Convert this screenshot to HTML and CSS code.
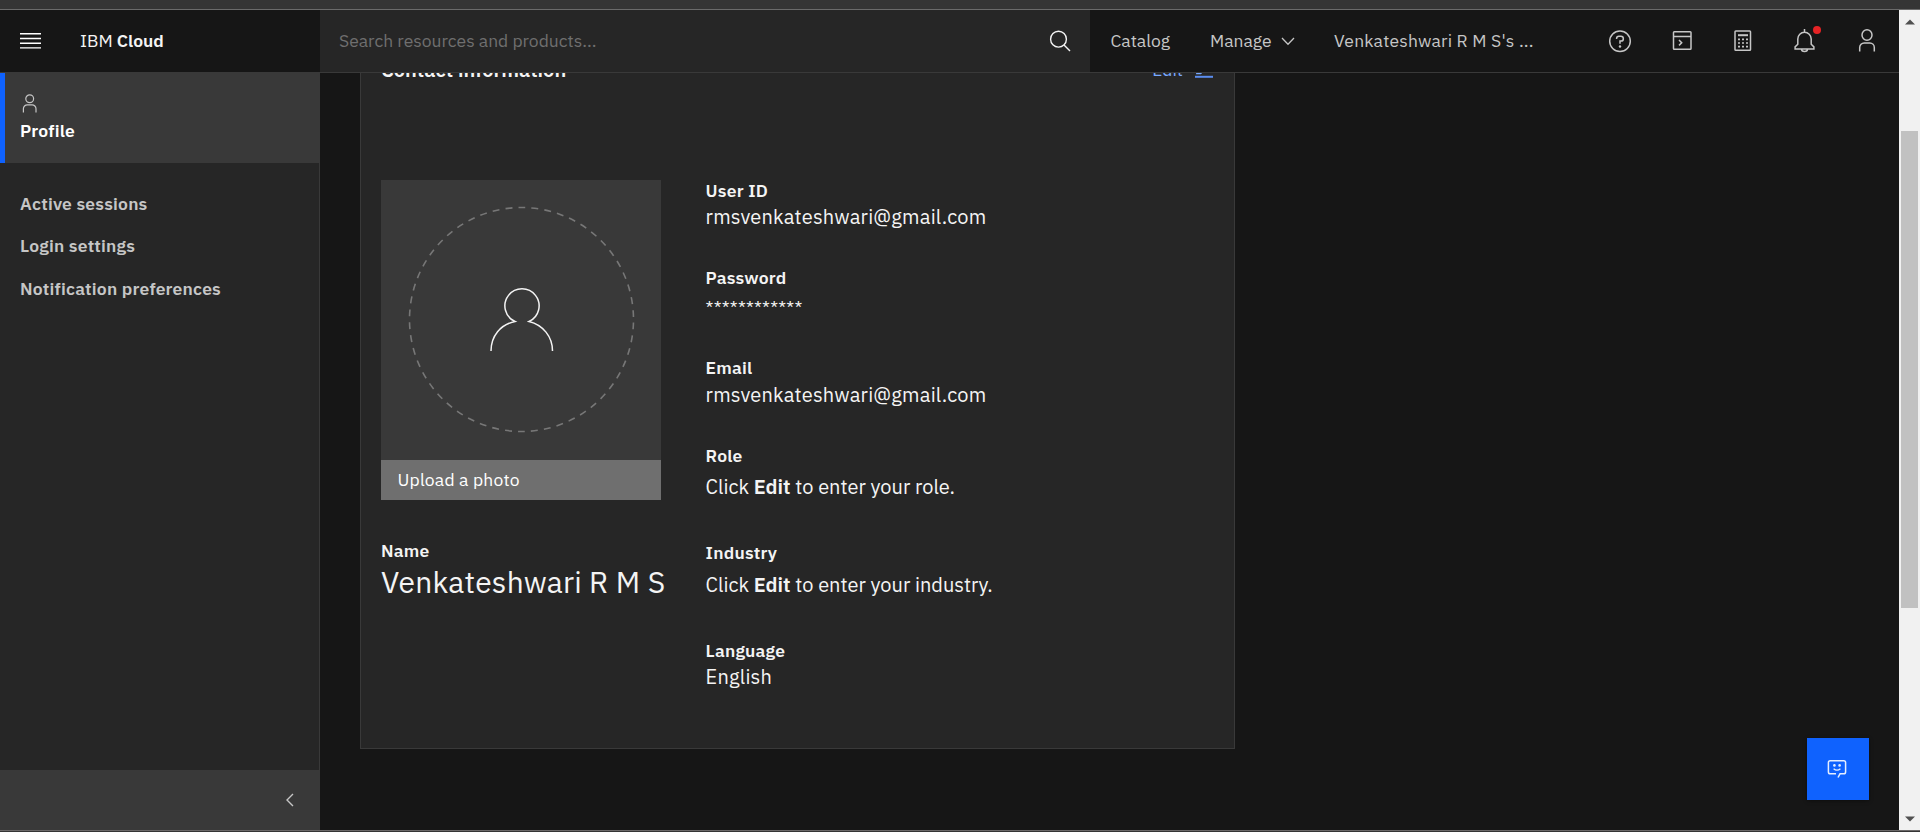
FILE: index.html
```html
<!DOCTYPE html>
<html lang="en">
<head>
<meta charset="utf-8">
<title>Profile - IBM Cloud</title>
<link rel="stylesheet" href="styles.css">
</head>
<body>
<div class="window">
  <div class="viewport">
    <div class="app">
      <header class="header">
        <div class="header-brand">
          <svg class="menu-icon" width="21" height="16" viewBox="0 0 21 16"><path d="M0 .8h21M0 5.500h21M0 10.200h21M0 14.900h21" stroke="#fff" stroke-width="1.4"/></svg>
          <span class="brand">IBM <b>Cloud</b></span>
        </div>
        <div class="search">
          <span class="search-text">Search resources and products...</span>
          <svg class="search-icon" width="22" height="22" viewBox="0 0 22 22" fill="none" stroke="#f4f4f4" stroke-width="1.4"><circle cx="9.5" cy="9.2" r="7.9"/><path d="M15 15l6 6"/></svg>
        </div>
        <nav class="nav">
          <span class="nav-catalog">Catalog</span>
          <span class="nav-manage">Manage</span>
          <svg class="nav-chevron" width="14" height="9" viewBox="0 0 14 9" fill="none" stroke="#c6c6c6" stroke-width="1.3"><path d="M1 1l6 6.2L13 1"/></svg>
          <span class="nav-account">Venkateshwari R M S's ...</span>
        </nav>
        <div class="tools">
          <svg width="24" height="24" viewBox="0 0 24 24" fill="none" stroke="#c6c6c6" stroke-width="1.5"><circle cx="12" cy="12.300" r="10.3"/><path d="M8.6 10.100v-.6a2.3 2.3 0 0 1 2.3-2.3h2a2.4 2.4 0 0 1 0 4.9H12v2.6"/><circle cx="12" cy="17.5" r="1.200" fill="#c6c6c6" stroke="none"/></svg>
          <svg width="24" height="24" viewBox="0 0 24 24" fill="none" stroke="#c6c6c6" stroke-width="1.5"><rect x="3.500" y="2.8" width="17.500" height="17.500" rx=".8"/><path d="M3.500 7.5h17.500M9 11l2.700 2.700L9 16.400"/></svg>
          <svg width="24" height="24" viewBox="0 0 24 24" fill="none" stroke="#c6c6c6" stroke-width="1.5"><rect x="4" y="2" width="15.500" height="19.200" rx=".8"/><path d="M7 6.200h10" stroke-width="2"/><path d="M7 10.400h2m2 0h2m2 0h2M7 14h2m2 0h2m2 0h2M7 17.600h2m2 0h2m2 0h2" stroke-width="1.6"/></svg>
          <span class="bell">
            <svg width="24" height="24" viewBox="0 0 24 24" fill="none" stroke="#c6c6c6" stroke-width="1.5"><path d="M11.500 0v3.500M4.800 15.2V10a6.700 6.700 0 0 1 13.400 0v5.2l2.700 2.700V20h-18.800v-2.1zM8.500 20a3 2.500 0 0 0 6 0"/></svg>
            <span class="bell-dot"></span>
          </span>
          <svg width="24" height="24" viewBox="0 0 24 24" fill="none" stroke="#c6c6c6" stroke-width="1.5"><ellipse cx="12" cy="6" rx="5" ry="5.2"/><path d="M4.7 22.5v-4a4.5 4.5 0 0 1 4.5-4.5h5.600a4.5 4.5 0 0 1 4.5 4.5v4"/></svg>
        </div>
      </header>
      <div class="main">
        <aside class="sidebar">
          <div class="side-active">
            <svg class="side-user" width="16" height="19" viewBox="0 0 16 19" fill="none" stroke="#c6c6c6" stroke-width="1.2"><circle cx="7.7" cy="4.8" r="3.9"/><path d="M1.4 18.4v-3.6a3.9 3.9 0 0 1 3.9-3.9h4.8a3.9 3.9 0 0 1 3.9 3.9v3.6"/></svg>
            <span class="side-profile">Profile</span>
          </div>
          <div class="side-links">
            <span class="side-sessions">Active sessions</span>
            <span class="side-login">Login settings</span>
            <span class="side-notify">Notification preferences</span>
          </div>
          <div class="side-collapse">
            <svg width="10" height="14" viewBox="0 0 10 14" fill="none" stroke="#c6c6c6" stroke-width="1.4"><path d="M8 1L2 7l6 6"/></svg>
          </div>
        </aside>
        <main class="content">
          <section class="card">
            <div class="card-head">
              <h2 class="card-title">Contact information</h2>
              <span class="edit"><span class="edit-text">Edit</span>
                <svg width="18" height="22" viewBox="0 0 18 22" fill="none" stroke="#78a9ff" stroke-width="1.4"><path d="M1.800 17.6v-4L11.300 4l4 4-9.7 9.6z"/><path d="M0 20.8h18" stroke="#5b8def" stroke-width="2"/></svg>
              </span>
            </div>
            <div class="card-body">
              <div class="identity">
                <div class="photo">
                  <svg width="280" height="280" viewBox="0 0 280 280" fill="none"><circle cx="140.5" cy="139.5" r="112" stroke="#777" stroke-width="1.6" stroke-dasharray="6.9 6.13" stroke-dashoffset="-3"/><path d="M110 171c0-15 9.500-26.500 24-29.500a17.100 17.100 0 1 1 14 0c14 3.500 23.500 15 23.500 29.500" stroke="#f4f4f4" stroke-width="1.5"/></svg>
                  <div class="upload"><span>Upload a photo</span></div>
                </div>
                <div class="label name-label">Name</div>
                <div class="name">Venkateshwari R M S</div>
              </div>
              <div class="fields">
                <div><div class="label">User ID</div><div class="value mail gap-s">rmsvenkateshwari@gmail.com</div></div>
                <div><div class="label">Password</div><div class="value stars">************</div></div>
                <div><div class="label">Email</div><div class="value mail gap-m">rmsvenkateshwari@gmail.com</div></div>
                <div><div class="label">Role</div><div class="value gap-l">Click <b>Edit</b> to enter your role.</div></div>
                <div><div class="label">Industry</div><div class="value gap-xl">Click <b>Edit</b> to enter your industry.</div></div>
                <div><div class="label">Language</div><div class="value mail gap-s">English</div></div>
              </div>
            </div>
          </section>
          <div class="chat">
            <svg width="20" height="20" viewBox="0 0 20 20" fill="none" stroke="#e5eeff" stroke-width="1.5"><path d="M9 14.800H3.200A1.800 1.800 0 0 1 1.400 13V3.500a1.800 1.800 0 0 1 1.800-1.800h13.600a1.800 1.800 0 0 1 1.800 1.800V13a1.800 1.800 0 0 1-1.800 1.800H13L11 18.500"/><path d="M6.600 9.700q3.400 2.800 6.800 0" stroke-width="1.300"/><circle cx="7.400" cy="6.400" r="1.300" fill="#e5eeff" stroke="none"/><circle cx="12.600" cy="6.400" r="1.300" fill="#e5eeff" stroke="none"/></svg>
          </div>
        </main>
      </div>
    </div>
    <div class="scrollbar">
      <svg width="10" height="6" viewBox="0 0 10 6"><path d="M0 5.500L5 .5l5 5z" fill="#505050"/></svg>
      <div class="thumb"></div>
      <svg width="10" height="6" viewBox="0 0 10 6"><path d="M0 .5l5 5 5-5z" fill="#505050"/></svg>
    </div>
  </div>
</div>
</body>
</html>
```
FILE: styles.css
```css
* { box-sizing: border-box; }
body { margin: 0; background: #353535; font-family: "IBM Plex Sans", Roboto, sans-serif; color: #f4f4f4; font-size: 17.5px; }
svg { display: block; flex: none; }
b { font-weight: 600; }
.window { height: 832px; padding: 9px 0 1px; overflow: hidden; }
.viewport { display: flex; height: 822px; border-top: 1px solid #6b6b6b; border-bottom: 1px solid #6b6868; }
.app { width: 1899px; display: flex; flex-direction: column; background: #161616; }

.header { height: 63px; flex: none; display: flex; border-bottom: 1px solid #393939; line-height: 62px; white-space: nowrap; }
.header-brand { width: 320px; display: flex; align-items: center; padding-left: 20px; gap: 39px; }
.search { width: 770px; background: #262626; display: flex; align-items: center; justify-content: space-between; padding: 0 19px; color: #6f6f6f; }
.nav { width: 502px; display: flex; align-items: center; color: #c6c6c6; padding-left: 20.5px; }
.nav-catalog { width: 99.5px; }
.nav-manage { width: 71px; }
.nav-chevron { margin-right: 39px; }
.nav-account { letter-spacing: .2px; }
.tools { display: flex; align-items: center; gap: 37.7px; padding-left: 16px; }
.bell { position: relative; }
.bell-dot { position: absolute; left: 20px; top: -3px; width: 8px; height: 8px; border-radius: 50%; background: #e62325; }

.main { flex: 1; min-height: 0; display: flex; }
.sidebar { width: 320px; background: #262626; display: flex; flex-direction: column; font-weight: 600; letter-spacing: .2px; box-shadow: inset -1px 0 #393939; }
.side-active { height: 90px; background: #393939; border-left: 5px solid #0f62fe; padding: 20px 0 0 15px; line-height: 24px; color: #fff; }
.side-user { margin: 1px 0 8px 2px; }
.side-profile { display: block; margin-top: -2px; }
.side-links { flex: 1; padding: 20px 0 0 20px; display: flex; flex-direction: column; color: #c6c6c6; line-height: 42px; }
.side-notify { margin-top: 1px; }
.side-collapse { height: 60px; background: #393939; display: flex; align-items: center; justify-content: flex-end; padding-right: 25px; }

.content { position: relative; width: 1579px; overflow: hidden; padding-left: 40px; }
.card { width: 875px; height: 717px; margin-top: -41px; background: #262626; border: 1px solid #393939; padding: 23px 20px 0; }
.card-head { display: flex; justify-content: space-between; line-height: 28px; height: 124px; }
.card-title { margin: 0; font-size: 20px; font-weight: 600; }
.edit { display: flex; gap: 12px; color: #78a9ff; padding-right: 1px; }
.card-body { display: flex; }
.identity { width: 324.6px; white-space: nowrap; }
.photo { width: 280px; height: 320px; background: #393939; }
.upload { height: 40px; background: #6f6f6f; line-height: 40px; padding-left: 16.5px; letter-spacing: .2px; color: #fff; }
.label { font-weight: 600; line-height: 22px; letter-spacing: .2px; }
.name-label { margin-top: 40px; }
.name { font-size: 30px; line-height: 40px; letter-spacing: .2px; }
.fields { display: grid; grid-template-rows: 87px 90px 88px 97px 98px 60px; white-space: nowrap; }
.value { font-size: 20px; line-height: 28px; }
.mail { letter-spacing: .2px; }
.gap-s { margin-top: 1px; }
.gap-m { margin-top: 2px; }
.gap-l { margin-top: 6px; }
.gap-xl { margin-top: 7px; }
.stars { margin-top: 5px; font-size: 17.5px; letter-spacing: .2px; }
.chat { position: absolute; right: 30px; bottom: 30px; width: 62px; height: 62px; background: #0f62fe; display: flex; align-items: center; justify-content: center; box-shadow: 0 1px 4px rgba(0,0,0,.4); padding-right: 2px; }

.scrollbar { width: 21px; background: #f1f1f1; padding: 9px 0 8px; display: flex; flex-direction: column; align-items: center; }
.thumb { width: 17px; height: 477px; margin: 106px 0 auto; background: #c1c1c1; }
```
